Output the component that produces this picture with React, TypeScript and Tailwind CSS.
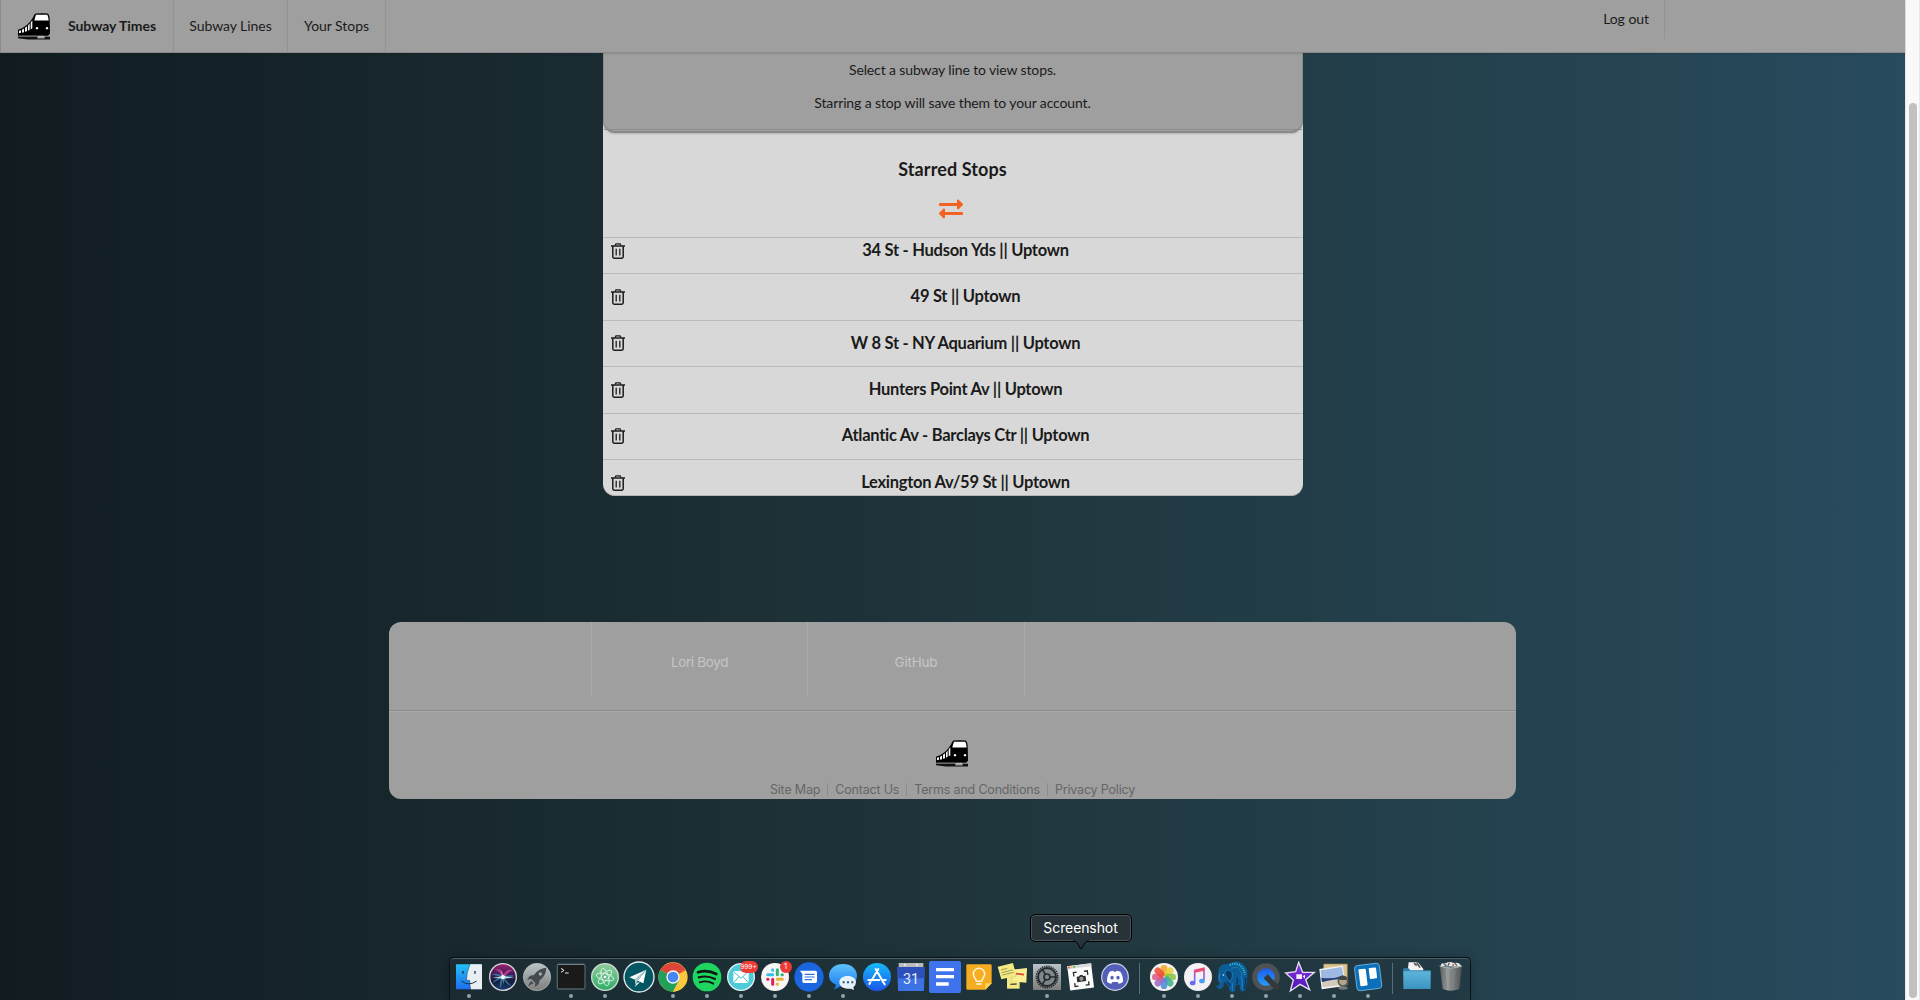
import React from "react";
import { FaExchangeAlt } from "react-icons/fa";

function Train() {
  return (
    <svg viewBox="0 0 96 80" className="block h-[27px] w-8 shrink-0">
      <path d="M0 50 Q28 42 45 13 Q48 2 53 1 Q71 -1 89 1 Q93 2 95 16 L96 62 L90 68 H0Z" fill="#000" />
      <path d="M0 70 H58 V76 H80 V71 H96 V79 H30 L0 75Z" fill="#111" />
      <path d="M54 5 H88 Q91 11 92 22 H49 Q51 12 54 5Z" fill="#fff" />
      <path d="M3 53 L9 51 V59 L3 60Z M12 50 L18 46 V57 L12 59Z M21 44 L27 39 V54 L21 56Z M30 37 L35 31 V50 L30 53Z M38 28 L43 21 V46 L38 48Z" fill="#f4f4f4" />
      <circle cx="57" cy="45" r="3.5" fill="#fff" />
      <circle cx="87" cy="45" r="3.5" fill="#fff" />
      <path d="M2 68.5 H58" stroke="#999" strokeWidth="1.6" />
      <path d="M60 70 H78" stroke="#bbb" strokeWidth="4" />
    </svg>
  );
}

function TrashOutline() {
  return (
    <svg viewBox="0 0 14 16" className="block h-4 w-3.5" fill="none" stroke="#1c1c1c">
      <path d="M0 2.9 H14" strokeWidth="1.5" />
      <path d="M4 2.5 L5 .8 H9 L10 2.5" strokeWidth="1.3" />
      <path d="M1.8 3 V13.8 Q1.8 15.2 3.2 15.2 H10.8 Q12.2 15.2 12.2 13.8 V3" strokeWidth="1.5" />
      <path d="M5.2 5.8 V12.4 M8.8 5.8 V12.4" strokeWidth="1.3" />
    </svg>
  );
}

const petals = ["#f5a623", "#e6cf3a", "#8bc34a", "#3fb28f", "#4a90d9", "#9b6bc6", "#dd5a8d", "#ef4f3c"];

type App = { name: string; dot?: boolean; badge?: string; art: React.ReactNode };

const mainApps: App[] = [
  {
    name: "Finder",
    dot: true,
    art: (
      <>
        <rect x="12" y="10" width="78" height="75" rx="2" fill="url(#finder)" />
        <path d="M54 10 H88 Q90 10 90 12 V83 Q90 85 88 85 H56 Q53 72 53 58 H43 Q44 32 54 10Z" fill="#e9eef5" />
        <path d="M33 30 V38 M69 30 V38" stroke="#17324a" strokeWidth="4" />
        <path d="M28 60 Q51 77 74 60" fill="none" stroke="#17324a" strokeWidth="3" />
        <path d="M54 10 Q44 32 43 58 H53 Q53 72 56 85" fill="none" stroke="#17324a" strokeWidth="1.5" />
      </>
    ),
  },
  {
    name: "Siri",
    art: (
      <>
        <circle cx="51" cy="48" r="40" fill="url(#siri)" stroke="#d8d8dc" strokeWidth="4" />
        <path d="M16 40 Q40 34 51 48 Q66 40 86 44 Q70 50 56 52 L76 76 Q56 66 51 52 L44 82 Q38 66 46 52 L20 66 Q26 54 46 48Z" fill="#3aa9d8" opacity=".6" />
        <path d="M51 48 Q36 26 26 26 Q48 20 53 40 Q62 22 80 28 Q66 34 56 48Z" fill="#e0479f" opacity=".7" />
        <path d="M20 50 L51 45 L84 50 L51 53Z M46 28 L51 46 L54 72 L48 50Z" fill="#bff3f2" opacity=".85" />
        <circle cx="51" cy="48" r="6" fill="#fff" />
      </>
    ),
  },
  {
    name: "Launchpad",
    art: (
      <>
        <circle cx="51" cy="48" r="41" fill="url(#silver)" stroke="#b8c2c5" strokeWidth="2" />
        <path d="M79 20 Q55 22 42 42 L30 44 L21 56 L34 54 L46 66 L44 78 L56 70 L59 58 Q78 44 79 20Z" fill="#444a4d" />
        <path d="M33 59 L24 75 L41 67Z" fill="#444a4d" />
        <circle cx="61" cy="39" r="5" fill="#a5adb0" />
      </>
    ),
  },
  {
    name: "Terminal",
    dot: true,
    art: (
      <>
        <rect x="10" y="10" width="83" height="74" rx="4" fill="#1a1a1a" stroke="#4b6068" strokeWidth="4" />
        <path d="M11 10 H91" stroke="#75888e" strokeWidth="3" />
        <path d="M21 22 L30 28 L21 34 M33 36 H44" fill="none" stroke="#eee" strokeWidth="3" />
      </>
    ),
  },
  {
    name: "Atom",
    dot: true,
    art: (
      <>
        <circle cx="51" cy="48" r="40" fill="url(#atom)" stroke="#cfdcd3" strokeWidth="4" />
        <g fill="none" stroke="#e6f6ec" strokeWidth="2.6">
          <ellipse cx="51" cy="48" rx="27" ry="10" transform="rotate(14 51 48)" />
          <ellipse cx="51" cy="48" rx="27" ry="10" transform="rotate(74 51 48)" />
          <ellipse cx="51" cy="48" rx="27" ry="10" transform="rotate(134 51 48)" />
        </g>
        <circle cx="51" cy="48" r="4" fill="#fff" />
      </>
    ),
  },
  {
    name: "Mail plane",
    art: (
      <>
        <circle cx="51" cy="48" r="45" fill="#035763" stroke="#e8eeee" strokeWidth="4" />
        <path d="M73 26 L22 49 L39 56Z" fill="#f3f6f6" />
        <path d="M73 26 L47 59 L64 67Z" fill="#fff" />
        <path d="M73 26 L39 56 L40 71 L47 59Z" fill="#b9cfd2" />
        <path d="M44 65 L54 64 L38 78Z" fill="#e7efef" />
      </>
    ),
  },
  {
    name: "Chrome",
    dot: true,
    art: (
      <>
        <circle cx="51" cy="48" r="44" fill="#fbc93d" />
        <path d="M51 48 L13 26 A44 44 0 0 0 51 92 L70 59Z" fill="#20a05b" />
        <path d="M51 48 L13 26 A44 44 0 0 1 89 28 H51Z" fill="#dd4538" />
        <path d="M51 28 H89 L51 48Z" fill="#dd4538" />
        <path d="M51 92 L69 58 H92 A44 44 0 0 1 51 92Z" fill="#fbc93d" />
        <circle cx="51" cy="48" r="20" fill="#f4f4f4" />
        <circle cx="51" cy="48" r="16" fill="#4486f4" />
      </>
    ),
  },
  {
    name: "Spotify",
    dot: true,
    art: (
      <>
        <circle cx="51" cy="48" r="43" fill="#1ed65f" />
        <g fill="none" stroke="#101614" strokeLinecap="round">
          <path d="M24 34 Q52 25 79 39" strokeWidth="8" />
          <path d="M26 49 Q52 42 75 54" strokeWidth="6.5" />
          <path d="M29 64 Q51 57 70 68" strokeWidth="5.5" />
        </g>
      </>
    ),
  },
  {
    name: "Mail",
    dot: true,
    badge: "999+",
    art: (
      <>
        <circle cx="51" cy="48" r="40" fill="#4ecbd8" stroke="#e4f4f3" strokeWidth="4" />
        <rect x="28" y="30" width="46" height="36" fill="#fff" />
        <path d="M28 31 L51 52 L74 31 M28 66 L45 47 M74 66 L57 47" fill="none" stroke="#3ec0cd" strokeWidth="3" />
      </>
    ),
  },
  {
    name: "Slack",
    dot: true,
    badge: "1",
    art: (
      <>
        <circle cx="51" cy="48" r="42" fill="#f8f6f4" />
        <g strokeWidth="9" strokeLinecap="round">
          <path d="M29 41 H44 M44 26 V28" stroke="#36bfea" />
          <path d="M58 26 V41 M72 41 H73" stroke="#2eb57c" />
          <path d="M58 55 H73 M58 69 V70" stroke="#ebb02e" />
          <path d="M44 55 V70 M29 55 H30" stroke="#df1f5a" />
        </g>
      </>
    ),
  },
  {
    name: "Android Messages",
    dot: true,
    art: (
      <>
        <circle cx="51" cy="48" r="44" fill="#1b66df" />
        <path d="M24 29 H70 Q75 29 75 34 V61 Q75 66 70 66 H36 Q31 66 31 61 V39Z" fill="#fff" />
        <path d="M38 40 H68 M38 48 H68 M38 56 H60" stroke="#3472db" strokeWidth="3.5" />
      </>
    ),
  },
  {
    name: "Messages",
    dot: true,
    art: (
      <>
        <path d="M51 9 C75 9 93 23 93 44 C93 64 75 77 51 77 L42 76 Q34 85 22 84 Q30 79 30 71 Q9 62 9 44 C9 23 27 9 51 9Z" fill="url(#bubble)" />
        <path d="M65 45 C80 45 90 53 90 64 Q90 72 82 79 L84 87 L74 83 H65 C50 83 40 75 40 64 C40 53 50 45 65 45Z" fill="#e6f2fb" />
        <path d="M50 64 H56 M63 64 H69 M76 64 H82" stroke="#29587d" strokeWidth="6" />
      </>
    ),
  },
  {
    name: "App Store",
    art: (
      <>
        <circle cx="51" cy="48" r="42" fill="url(#store)" />
        <path d="M47 24 L66 57 M55 24 L35 58 M25 57 H58 M68 57 H77 M31 64 L28 69 M67 59 L74 70" stroke="#fff" strokeWidth="6" strokeLinecap="round" />
      </>
    ),
  },
  {
    name: "Calendar",
    art: (
      <>
        <path d="M10 18 H92 L90 88 Q90 90 88 90 H14 Q12 90 12 88Z" fill="#3d72e4" />
        <path d="M9 18 H93 L91 52 H11Z" fill="#2d50bb" />
        <path d="M14 6 H88 V18 H14Z" fill="#b9babd" />
        <circle cx="33" cy="12" r="3" fill="#eee" />
        <circle cx="69" cy="12" r="3" fill="#eee" />
        <text x="51" y="69" textAnchor="middle" fill="#e6edfb" fontSize="43" fontFamily="Roboto, sans-serif">31</text>
      </>
    ),
  },
  {
    name: "Docs",
    art: (
      <>
        <rect x="3" y="0" width="96" height="96" rx="6" fill="#3e73ec" />
        <path d="M24 26 H78 M24 47 H78 M24 69 H62" stroke="#fff" strokeWidth="10" />
      </>
    ),
  },
  {
    name: "Keep",
    art: (
      <>
        <path d="M17 10 H85 Q89 10 89 14 V67 L70 86 H17 Q13 86 13 82 V14 Q13 10 17 10Z" fill="#f6ad22" />
        <path d="M89 67 L70 86 V67Z" fill="#ffd45f" />
        <path d="M43 61 C43 53 34 50 34 39 A17 17 0 0 1 68 39 C68 50 59 53 59 61Z" fill="none" stroke="#fff4d4" strokeWidth="4.5" />
        <path d="M43 69 H59" stroke="#fff4d4" strokeWidth="5" />
      </>
    ),
  },
  {
    name: "Stickies",
    art: (
      <>
        <path d="M33 45 H71 V83 H33Z" fill="#f2e782" />
        <path d="M46 26 L93 21 L91 65 L48 61Z" fill="#f7ef92" />
        <path d="M5 17 L51 6 L61 45 L16 55Z" fill="#f4ea83" />
        <path d="M48 61 L46 50 L61 45 L59 38" fill="none" stroke="#c9bf62" strokeWidth="1.5" />
        <path d="M15 27 L34 22 M17 35 L50 27 M19 42 L53 34" stroke="#777344" strokeWidth="2" />
        <path d="M60 38 L84 41" stroke="#d94a35" strokeWidth="5" />
        <path d="M43 70 L62 69" stroke="#4c4a31" strokeWidth="4" />
      </>
    ),
  },
  {
    name: "System Preferences",
    dot: true,
    art: (
      <>
        <rect x="9" y="9" width="84" height="78" fill="url(#silver)" />
        <circle cx="51" cy="48" r="32" fill="none" stroke="#24292c" strokeWidth="5" strokeDasharray="4 2.7" />
        <circle cx="51" cy="48" r="27" fill="#7f888b" stroke="#272b2e" strokeWidth="6" />
        <circle cx="51" cy="48" r="9" fill="none" stroke="#272b2e" strokeWidth="5" />
        <path d="M60 48 H76 M46 40 L38 27 M46 56 L38 69" stroke="#272b2e" strokeWidth="5" />
      </>
    ),
  },
  {
    name: "Screenshot",
    art: (
      <>
        <g transform="rotate(-7 51 48)">
          <rect x="14" y="11" width="72" height="73" fill="#fbfbfb" />
          <rect x="14" y="11" width="72" height="9" fill="#d9dadb" />
          <path d="M16 15.5 H21" stroke="#ef5346" strokeWidth="5" />
          <path d="M24 15.5 H29" stroke="#e8b93a" strokeWidth="5" />
          <path d="M32 15.5 H37" stroke="#3fb54a" strokeWidth="5" />
          <path d="M30 44 V32 H40 M62 32 H72 V44 M72 64 V74 H62 M40 74 H30 V64" fill="none" stroke="#2c2c2c" strokeWidth="4" />
          <path d="M38 46 H45 L48 42 H55 L58 46 H65 V62 H38Z" fill="#2c2c2c" />
          <circle cx="51.500" cy="53.500" r="5" fill="#888" stroke="#ccc" strokeWidth="1.5" />
        </g>
      </>
    ),
  },
  {
    name: "Discord",
    art: (
      <>
        <circle cx="51" cy="48" r="40" fill="#5460b8" stroke="#cfd3ea" strokeWidth="3.5" />
        <path d="M35 32 Q41 29 46 29 L48 32 H54 L56 29 Q61 29 67 32 Q76 45 75 62 Q68 68 62 68 L59 63 H43 L40 68 Q34 68 27 62 Q26 45 35 32Z" fill="#fff" />
        <ellipse cx="42" cy="50" rx="5" ry="5.500" fill="#5460b8" />
        <ellipse cx="60" cy="50" rx="5" ry="5.500" fill="#5460b8" />
      </>
    ),
  },
];

const recentApps: App[] = [
  {
    name: "Photos",
    dot: true,
    art: (
      <>
        <circle cx="51" cy="48" r="42" fill="#f4f3f0" />
        {petals.map((color, i) => (
          <rect key={color} x="41" y="12" width="20" height="34" rx="10" fill={color} opacity=".88" transform={`rotate(${i * 45} 51 48)`} />
        ))}
      </>
    ),
  },
  {
    name: "Music",
    dot: true,
    art: (
      <>
        <circle cx="51" cy="48" r="42" fill="#f3f1f5" />
        <path d="M41 64 V28 L69 22 V58" fill="none" stroke="url(#note)" strokeWidth="5" />
        <path d="M41 32 L69 26" stroke="#ee4a78" strokeWidth="7" />
        <ellipse cx="35" cy="66" rx="8.500" ry="7" fill="#6b6cf0" />
        <ellipse cx="63" cy="60" rx="8.500" ry="7" fill="#4b9cf2" />
      </>
    ),
  },
  {
    name: "Postgres",
    dot: true,
    art: (
      <>
        <path d="M20 12 Q34 8 39 10 Q62 -6 83 8 Q98 20 97 40 Q98 62 92 80 L91 88 Q82 94 75 86 L74 72 Q66 70 61 74 L60 91 Q49 97 43 88 L41 76 Q32 66 29 62 Q26 80 16 84 Q6 84 3 72 Q11 78 14 66 Q4 60 11 36 Q7 22 20 12Z" fill="#0c5c97" />
        <path d="M29 36 Q38 18 52 36 Q54 52 45 62 Q36 55 29 36Z" fill="#083a63" stroke="#2a93c8" strokeWidth="2" />
        <path d="M44 12 Q66 2 80 18 Q90 30 89 42" fill="none" stroke="#32b4cd" strokeWidth="6" strokeDasharray="4 3" />
        <path d="M50 22 Q66 14 74 26 Q80 34 80 44" fill="none" stroke="#2a9cc4" strokeWidth="3" strokeDasharray="3 3" />
        <path d="M15 34 Q8 55 20 64 M78 46 Q84 62 82 86 M52 66 V90" fill="none" stroke="#1b84c3" strokeWidth="3" />
        <path d="M66 50 Q70 60 66 70 M36 62 L46 74 M92 50 Q92 66 88 84" fill="none" stroke="#07365f" strokeWidth="4" />
        <circle cx="25" cy="42" r="2.500" fill="#d9f3ff" />
      </>
    ),
  },
  {
    name: "QuickTime",
    dot: true,
    art: (
      <>
        <circle cx="51" cy="48" r="34" fill="url(#quick)" stroke="#4e5255" strokeWidth="15" />
        <path d="M50 46 L88 84" stroke="#34383b" strokeWidth="17" />
      </>
    ),
  },
  {
    name: "iMovie",
    dot: true,
    art: (
      <>
        <path d="M47 4 L59 34 L94 34 L68 56 L80 86 L51 70 L22 90 L31 57 L8 36 L38 32Z" fill="url(#movie)" stroke="#e3dff0" strokeWidth="4" />
        <path d="M40 40 H57 V54 H40Z M59 46 L66 41 V53Z" fill="#f1eafa" />
      </>
    ),
  },
  {
    name: "Preview",
    dot: true,
    art: (
      <>
        <path d="M20 9 H91 V72 H20Z" fill="#dbc593" stroke="#9b7c46" strokeWidth="2" />
        <path d="M7 24 L78 14 L84 75 L14 85Z" fill="#f5f5f2" />
        <path d="M11 28 L75 18 L80 50 L14 59Z" fill="#9db9e4" />
        <path d="M13 50 Q40 56 79 44 L80 56 L15 64Z" fill="#253f79" />
        <path d="M15 64 Q50 54 80 54 L81 71 L17 79Z" fill="#d3cabb" />
        <circle cx="78" cy="61" r="14" fill="#b3a48d" stroke="#565856" strokeWidth="5" />
        <path d="M64 49 Q77 38 90 49 L88 57 H68Z" fill="#404443" />
        <ellipse cx="78" cy="81" rx="14" ry="5" fill="#777a78" />
      </>
    ),
  },
  {
    name: "Trello",
    dot: true,
    art: (
      <g transform="rotate(-7 51 48)">
        <rect x="14" y="10" width="75" height="76" rx="9" fill="#0b6fba" stroke="#72b7de" strokeWidth="2.500" />
        <rect x="25" y="22" width="22" height="51" rx="3" fill="#fff" />
        <rect x="56" y="22" width="22" height="33" rx="3" fill="#fff" />
      </g>
    ),
  },
];

const placeApps: App[] = [
  {
    name: "Downloads",
    art: (
      <>
        <path d="M26 4 H54 L70 24 V40 H22Z" fill="#f3f3f3" />
        <path d="M42 6 L50 14 M50 4 L60 20" stroke="#555" strokeWidth="5" />
        <path d="M10 22 H26 L31 28 H92 V42 H10Z" fill="#3482aa" />
        <path d="M10 31 H92 V82 Q92 84 90 84 H12 Q10 84 10 82Z" fill="url(#folder)" />
      </>
    ),
  },
  {
    name: "Trash",
    art: (
      <>
        <path d="M20 16 Q21 3 35 7 Q47 0 59 6 Q78 2 82 17Z" fill="#e7e7e5" />
        <path d="M28 7 L36 14 M46 5 L42 14 M62 6 L69 14" stroke="#5a5f61" strokeWidth="4" />
        <path d="M55 12 H60" stroke="#c9433f" strokeWidth="4" />
        <path d="M34 13 H39" stroke="#3d83c2" strokeWidth="4" />
        <path d="M17 15 L26 84 Q50 94 76 84 L84 15 Q50 27 17 15Z" fill="url(#can)" />
        <path d="M17 15 Q50 27 84 15" fill="none" stroke="#b8bcbd" strokeWidth="3" />
        <path d="M32 26 L37 82 M51 28 V85 M69 26 L64 82" stroke="#5f6365" strokeWidth="2" opacity=".5" />
      </>
    ),
  },
];

function Gradient({ id, stops, flat }: { id: string; stops: string[]; flat?: boolean }) {
  return (
    <linearGradient id={id} x1="0" y1="0" x2={flat ? "1" : "0"} y2={flat ? "0" : "1"}>
      {stops.map((c, i) => (
        <stop key={i} offset={i / (stops.length - 1)} stopColor={c} />
      ))}
    </linearGradient>
  );
}

function DockDefs() {
  return (
    <svg className="absolute h-0 w-0">
      <defs>
        <Gradient id="finder" stops={["#22c0f6", "#1e6df0"]} />
        <Gradient id="siri" stops={["#a0206f", "#4b1d5c", "#141c3c", "#1f3f74"]} />
        <Gradient id="silver" stops={["#b9c4c8", "#7e7d7b"]} />
        <Gradient id="atom" stops={["#8fcb9f", "#2fae66"]} />
        <Gradient id="bubble" stops={["#5fc3fb", "#1879ee"]} />
        <Gradient id="store" stops={["#17b9fa", "#1a56e8"]} />
        <Gradient id="note" stops={["#f2486f", "#a35be0", "#5a80f2"]} />
        <Gradient id="quick" stops={["#1d50e8", "#25a8fb"]} />
        <Gradient id="movie" stops={["#8d35e6", "#4a12b5"]} />
        <Gradient id="folder" stops={["#5db5dc", "#3c93bf"]} />
        <Gradient id="can" stops={["#55585a", "#9a9d9e", "#77797a", "#4a4d4f"]} flat />
      </defs>
    </svg>
  );
}

function DockIcon({ app }: { app: App }) {
  return (
    <div className="relative flex w-[34px] flex-col items-center">
      <svg viewBox="0 0 102 96" className="block h-8 w-[34px] shrink-0">{app.art}</svg>
      {app.dot && <span className="mt-px h-1 w-1 shrink-0 rounded-full bg-[#94a3a9]" />}
      {app.badge && (
        <span
          className={
            "absolute top-0 right-0 flex h-3 items-center justify-center rounded-full bg-[#ee3a36] leading-none text-white " +
            (app.badge.length > 1 ? "w-[18px] text-[6.5px]" : "w-3 text-[7.5px]")
          }
        >
          {app.badge}
        </span>
      )}
      {app.name === "Screenshot" && (
        <div className="absolute -top-[47px] left-1/2 flex h-[28px] w-[102px] -translate-x-1/2 items-center justify-center rounded-[5px] border border-black bg-[#273338] text-[14px] tracking-[-0.1px] text-white shadow-[inset_0_0_0_1px_#475358]">
          Screenshot
          <svg viewBox="0 0 18 10" className="absolute top-[25px] left-[41px] h-[10px] w-[18px]">
            <path d="M1 0 Q4 1 6 4 L8 8 Q9 9.500 10 8 L12 4 Q14 1 17 0Z" fill="#273338" />
            <path d="M1 .7 Q4 1 6 4 L8 8 Q9 9.500 10 8 L12 4 Q14 1 17 .7" fill="none" stroke="#000" />
          </svg>
        </div>
      )}
    </div>
  );
}

function DockDivider() {
  return (
    <div className="flex w-[15px] justify-center pt-0.5">
      <div className="h-[31px] w-px bg-[#5b6d75]" />
    </div>
  );
}

const stops = [
  "34 St - Hudson Yds || Uptown",
  "49 St || Uptown",
  "W 8 St - NY Aquarium || Uptown",
  "Hunters Point Av || Uptown",
  "Atlantic Av - Barclays Ctr || Uptown",
  "Lexington Av/59 St || Uptown",
];

const footerLinks = ["Site Map", "Contact Us", "Terms and Conditions", "Privacy Policy"];

export default function App() {
  return (
    <div className="flex h-[1000px] w-[1920px] overflow-hidden font-['Lato',sans-serif] text-sm text-[#1b1b1b]">
      <div className="flex w-[1905px] flex-col items-center bg-[linear-gradient(to_right,#111c21,#1f353b_50%,#284b5e)]">
        <nav className="z-10 flex h-[53px] w-full shrink-0 border-b border-l border-[#8a8a8a] bg-[#9f9f9f] tracking-[-0.05px] shadow-[0_1px_2px_rgba(34,36,38,0.15)]">
          <div className="flex w-[173px] items-center border-r border-[#929292] pl-[17px] font-bold">
            <Train />
            <span className="ml-[18px]">Subway Times</span>
          </div>
          <div className="flex w-[114px] items-center justify-center border-r border-[#929292]">Subway Lines</div>
          <div className="flex w-[98px] items-center justify-center border-r border-[#929292]">Your Stops</div>
          <div className="mr-[240px] ml-auto flex h-[39px] items-center border-r border-[#929292] pr-[15px] pb-0.5">Log out</div>
        </nav>

        <main className="flex h-[443px] w-[700px] shrink-0 flex-col overflow-hidden rounded-b-xl border-b border-[#b5b5b5] bg-[#d8d8d8]">
          <div className="flex h-[80px] shrink-0 flex-col items-center rounded-b-xl border-x border-b-2 border-[#8a8a8a] bg-[#9f9f9f] tracking-[-0.12px] shadow-[0_1px_2px_rgba(34,36,38,0.2)]">
            <p className="mt-[7px] leading-5">Select a subway line to view stops.</p>
            <p className="mt-[13px] leading-5">Starring a stop will save them to your account.</p>
            <div className="mt-4 h-px w-full bg-[#8e8e8e]" />
          </div>
          <h3 className="mt-[24px] text-center text-[18px] leading-6 font-bold tracking-[0.1px]">Starred Stops</h3>
          <FaExchangeAlt className="mt-4 ml-[336px] h-6 w-6 shrink-0 text-[#f26322]" />
          <div className="mt-4 flex h-[259px] shrink-0 flex-col overflow-hidden border-t border-[#bababa]">
            <div className="-mt-[10px] flex flex-col">
              {stops.map((stop) => (
                <div key={stop} className="flex h-[46.4px] shrink-0 items-center border-b border-[#bababa] pl-2">
                  <TrashOutline />
                  <span className="flex-1 pl-[4px] text-center text-[16.5px] font-bold tracking-[-0.27px]">{stop}</span>
                </div>
              ))}
            </div>
          </div>
        </main>

        <footer className="mt-[126px] flex h-[177px] w-[1127px] shrink-0 flex-col rounded-xl bg-[#9f9f9f] font-['Inter',sans-serif]">
          <div className="flex h-[74px] text-[13.500px] text-[#c6c6c6]">
            <div className="w-[203px] border-r border-[#ababab]" />
            <div className="flex w-[216px] items-center justify-center border-r border-[#ababab] pt-2 tracking-[-0.35px]">Lori Boyd</div>
            <div className="flex w-[217px] items-center justify-center border-r border-[#ababab] pt-2 tracking-[-0.2px]">GitHub</div>
          </div>
          <div className="mt-[14px] flex flex-col items-center border-t border-[#8a8a8a]">
            <div className="h-px w-full bg-[#ababab]" />
            <div className="mt-7 mr-px">
              <Train />
            </div>
            <div className="mt-4 flex text-[12.500px] leading-[13px] tracking-[-0.18px] text-[#666]">
              {footerLinks.map((link, i) => (
                <span key={link} className="border-l border-[#8c8c8c] px-[7px] first:border-l-0 first:pl-0 last:pr-0">
                  {link}
                </span>
              ))}
            </div>
          </div>
        </footer>

        <div className="relative mt-auto flex h-[43px] w-[1022px] shrink-0 translate-x-[7px] rounded-t-[5px] border-x border-t border-[#0b1216] bg-[#1e3038]/40 pt-[3px] pl-[2px] font-['Inter',sans-serif] shadow-[inset_0_1px_0_#4d5f67,0_0_12px_rgba(0,0,0,0.2)]">
          <DockDefs />
          {mainApps.map((app) => <DockIcon key={app.name} app={app} />)}
          <DockDivider />
          {recentApps.map((app) => <DockIcon key={app.name} app={app} />)}
          <DockDivider />
          {placeApps.map((app) => <DockIcon key={app.name} app={app} />)}
        </div>
      </div>

      <div className="flex w-[15px] flex-col items-center border-x border-[#e8e8e8] bg-[#f9f9f9] pt-[103px] pb-0.5">
        <div className="w-2 flex-1 rounded-full bg-[#c1c1c1]" />
      </div>
    </div>
  );
}
